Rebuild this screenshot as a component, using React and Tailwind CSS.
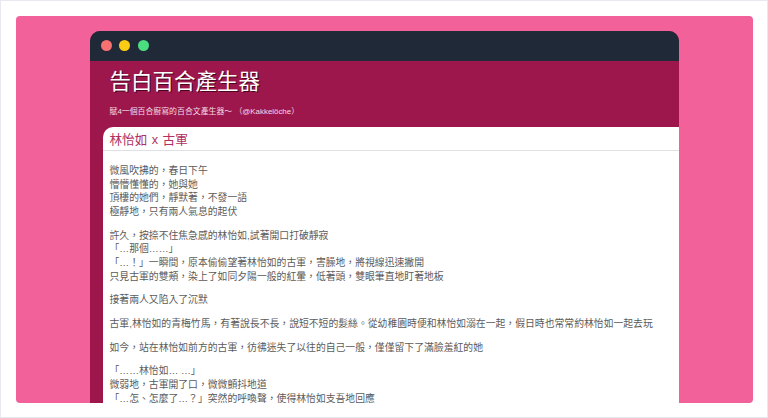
import React from "react";

const paragraphs = [
  ["微風吹拂的，春日下午", "懵懵懂懂的，她與她", "頂樓的她們，靜默著，不發一語", "極靜地，只有兩人氣息的起伏"],
  ["許久，按捺不住焦急感的林怡如,試著開口打破靜寂", "「…那個……」", "「…！」一瞬間，原本偷偷望著林怡如的古軍，害臊地，將視線迅速撇開", "只見古軍的雙頰，染上了如同夕陽一般的紅暈，低著頭，雙眼筆直地盯著地板"],
  ["接著兩人又陷入了沉默"],
  ["古軍,林怡如的青梅竹馬，有著說長不長，說短不短的髮絲。從幼稚園時便和林怡如溺在一起，假日時也常常約林怡如一起去玩"],
  ["如今，站在林怡如前方的古軍，彷彿迷失了以往的自己一般，僅僅留下了滿臉羞紅的她"],
  ["「……林怡如… …」", "微弱地，古軍開了口，微微顫抖地道", "「…怎、怎麼了…？」突然的呼喚聲，使得林怡如支吾地回應"],
];

const font = { fontFamily: '"Liberation Sans", "Noto Sans CJK TC", sans-serif' };

export default function App() {
  return (
    <div className="w-[768px] h-[418px] overflow-hidden bg-white border border-[#e8e9f0] pt-[14.5px] pl-[14.5px] pr-[14.5px]" style={font}>
      <div className="h-[387px] rounded-[4px] bg-[#f3619b] pt-[15px] pl-[74px] overflow-hidden">
        <div className="h-[372px] w-[589px] rounded-t-[10px] overflow-hidden flex flex-col bg-[#9d174d]">
          <div className="h-[30px] shrink-0 bg-[#1f2937] flex items-center gap-[7.5px] pl-[11px]">
            <span className="w-[11px] h-[11px] rounded-full bg-[#f87171]" />
            <span className="w-[11px] h-[11px] rounded-full bg-[#facc15]" />
            <span className="w-[11px] h-[11px] rounded-full bg-[#4ade80]" />
          </div>
          <div className="h-[66px] shrink-0 pl-[20px] text-white">
            <h1 className="text-[21.5px] leading-[28px] mt-[7px] [text-shadow:1px_1px_0_rgba(50,0,20,0.8)]">告白百合產生器</h1>
            <p className="text-[7.9px] leading-[10px] mt-[11px] text-[#f3dbe5] whitespace-pre">賦4一個百合廚寫的百合文產生器～ （@Kakkelöche）</p>
          </div>
          <div className="flex-1 min-h-0 ml-[13px] bg-white rounded-tl-[10px] overflow-hidden">
            <div className="h-[24.5px] border-b border-[#e0e0e4] pl-[7px] text-[12.6px] leading-[27px] text-[#b0305f] whitespace-nowrap [word-spacing:1px]">林怡如 x 古軍</div>
            <div className="pl-[7px] pt-[13px] flex flex-col gap-[9.9px] text-[9.84px] leading-[13.7px] text-[#5b5b5b] whitespace-nowrap">
              {paragraphs.map((lines, i) => (
                <p key={i}>
                  {lines.map((l, j) => (
                    <span key={j} className="block">{l}</span>
                  ))}
                </p>
              ))}
            </div>
          </div>
        </div>
      </div>
    </div>
  );
}
